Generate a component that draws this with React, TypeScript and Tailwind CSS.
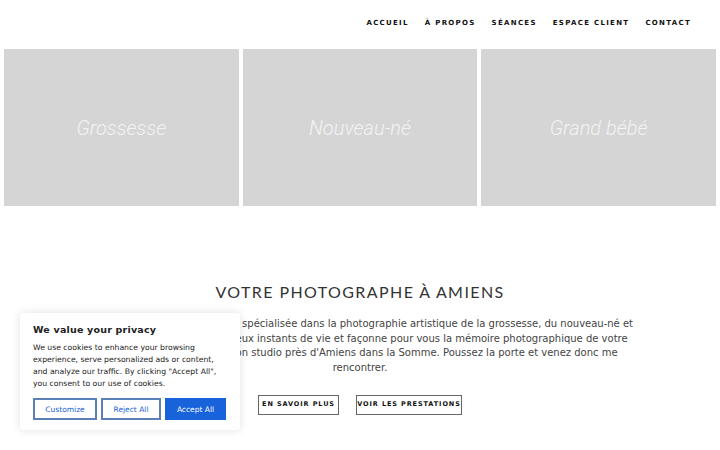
import React from 'react';

const navLinks = ['Accueil', 'À propos', 'Séances', 'Espace client', 'Contact'];

const sessions = ['Grossesse', 'Nouveau-né', 'Grand bébé'];

const CookieBanner: React.FC = () => (
  <div className="absolute left-[20px] top-[313px] w-[220px] rounded-[3px] bg-white px-[13px] pt-[10px] pb-[10px] shadow-[0_0_10px_rgba(0,0,0,0.12)] font-['DejaVu_Sans',sans-serif]">
    <p className="text-[9.5px] font-bold tracking-[0.2px] text-[#212121]">We value your privacy</p>
    <p className="mt-[5px] text-[7.7px] leading-[12px] text-[#212121]">
      We use cookies to enhance your browsing experience, serve personalized ads or content, and analyze our traffic. By clicking "Accept All", you consent to our use of cookies.
    </p>
    <div className="mt-[8px] flex gap-[4px]">
      <button className="h-[22px] w-[64px] border-2 border-[#5b80b8] text-[7.5px] text-[#1863dc]">Customize</button>
      <button className="h-[22px] w-[60px] border-2 border-[#5b80b8] text-[7.5px] text-[#1863dc]">Reject All</button>
      <button className="h-[22px] w-[61px] border-2 border-[#1863dc] bg-[#1863dc] text-[7.5px] text-white">Accept All</button>
    </div>
  </div>
);

export default function App() {
  return (
    <div className="relative h-[450px] w-[720px] overflow-hidden bg-white font-['DejaVu_Sans',sans-serif]">
      {/* Header */}
      <header className="flex h-[45px] items-center justify-end pt-[1px] pr-[29px]">
        <nav className="flex gap-[16px]">
          {navLinks.map((link) => (
            <a key={link} className="text-[7px] font-bold uppercase tracking-[1.3px] text-[#111]">
              {link}
            </a>
          ))}
        </nav>
      </header>

      {/* Sessions */}
      <section className="mt-[4px] grid grid-cols-3 gap-[4px] px-[4px]">
        {sessions.map((s) => (
          <div key={s} className="flex h-[157px] items-center justify-center bg-[#d5d5d5]">
            <span className="font-['Roboto',sans-serif] text-[20px] font-light italic text-[#f3f3f3]">{s}</span>
          </div>
        ))}
      </section>

      {/* Intro */}
      <section className="mt-[74px] flex flex-col items-center">
        <h1 className="font-['Lato',sans-serif] text-[16px] uppercase tracking-[1.4px] text-[#333]">Votre photographe à Amiens</h1>
        <p className="mt-[13px] max-w-[551px] text-center text-[10px] leading-[14.5px] text-[#444]">
          Je suis photographe à Amiens, spécialisée dans la photographie artistique de la grossesse, du nouveau-né et
          l'enfant. Je capture vos précieux instants de vie et façonne pour vous la mémoire photographique de votre
          histoire de famille, dans mon studio près d'Amiens dans la Somme. Poussez la porte et venez donc me rencontrer.
        </p>
        <div className="mt-[20px] flex gap-[17px]">
          <a className="flex h-[20px] w-[81px] items-center justify-center whitespace-nowrap border border-[#666] text-[6.5px] font-bold uppercase tracking-[0.9px] text-[#111]">
            En savoir plus
          </a>
          <a className="flex h-[20px] w-[106px] items-center justify-center whitespace-nowrap border border-[#666] text-[6.5px] font-bold uppercase tracking-[0.9px] text-[#111]">
            Voir les prestations
          </a>
        </div>
      </section>

      <CookieBanner />
    </div>
  );
}
